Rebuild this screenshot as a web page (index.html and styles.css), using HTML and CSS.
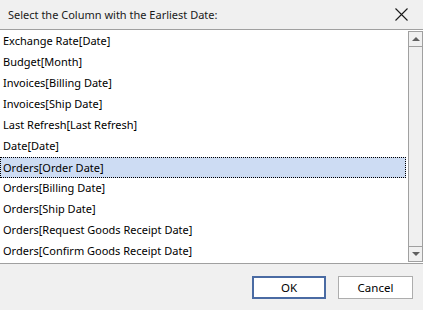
FILE: index.html
```html
<!DOCTYPE html>
<html>

<head>
  <link rel="stylesheet" href="styles.css">
</head>

<body>
  <div class="dialog">
    <div class="titlebar">
      <span class="title">Select the Column with the Earliest Date:</span>
      <svg class="close" width="13" height="13" viewBox="0 0 13 13">
        <path d="M0.5 0.5 L12.5 12.5 M12.5 0.5 L0.5 12.5" stroke="#1a1a1a" stroke-width="1.1" fill="none" />
      </svg>
    </div>

    <div class="listbox">
      <ul class="items">
        <li>Exchange Rate[Date]</li>
        <li>Budget[Month]</li>
        <li>Invoices[Billing Date]</li>
        <li>Invoices[Ship Date]</li>
        <li>Last Refresh[Last Refresh]</li>
        <li>Date[Date]</li>
        <li class="selected">Orders[Order Date]</li>
        <li>Orders[Billing Date]</li>
        <li>Orders[Ship Date]</li>
        <li>Orders[Request Goods Receipt Date]</li>
        <li>Orders[Confirm Goods Receipt Date]</li>
      </ul>
      <div class="scrollbar">
        <div class="sb-btn up"><span class="arrow-up"></span></div>
        <div class="track"></div>
        <div class="sb-btn down"><span class="arrow-down"></span></div>
      </div>
    </div>

    <div class="footer">
      <button class="btn primary">OK</button>
      <button class="btn">Cancel</button>
    </div>
  </div>
</body>

</html>
```

FILE: styles.css
```css
* {
  margin: 0;
  padding: 0;
  box-sizing: border-box;
}

body {
  background-color: #f0f0f0;
  font-family: "Noto Sans", "Open Sans", sans-serif;
  font-size: 11px;
  color: #000;
}

.dialog {
  width: 423px;
  height: 310px;
  display: flex;
  flex-direction: column;
}

.titlebar {
  height: 29px;
  display: flex;
  align-items: center;
  justify-content: space-between;
  padding: 0 15px 0 8px;
}

.title {
  color: #1a1a1a;
}

.listbox {
  display: flex;
  height: 235px;
  border-top: 1px solid #a0a0a0;
  border-bottom: 1px solid #a0a0a0;
  background-color: #fff;
}

.items {
  list-style: none;
  flex: 1;
  padding-top: 1px;
}

.items li {
  height: 21px;
  line-height: 20px;
  padding-left: 3px;
  white-space: nowrap;
}

.items li.selected {
  background-color: #cddcf3;
  border: 1px dotted #000;
  padding-left: 2px;
  line-height: 19px;
  margin-right: 1px;
}

.scrollbar {
  width: 15px;
  margin: 1px 0 1px 1px;
  display: flex;
  flex-direction: column;
  border-left: 1px solid #a0a0a0;
  border-right: 1px solid #a0a0a0;
  background-color: #f0f0f0;
}

.sb-btn {
  height: 16px;
  display: flex;
  align-items: center;
  justify-content: center;
  border-top: 1px solid #a0a0a0;
  border-bottom: 1px solid #a0a0a0;
  background-color: #f0f0f0;
}

.track {
  flex: 1;
}

.arrow-up {
  width: 0;
  height: 0;
  border-left: 4px solid transparent;
  border-right: 4px solid transparent;
  border-bottom: 4px solid #606060;
}

.arrow-down {
  width: 0;
  height: 0;
  border-left: 4px solid transparent;
  border-right: 4px solid transparent;
  border-top: 4px solid #606060;
}

.footer {
  flex: 1;
  display: flex;
  justify-content: flex-end;
  align-items: flex-start;
  gap: 12px;
  padding: 12px 10px 0 0;
}

.btn {
  width: 75px;
  height: 23px;
  font-family: "Noto Sans", "Open Sans", sans-serif;
  font-size: 11.5px;
  color: #000;
  background-color: #fff;
  border: 1px solid #adadad;
}

.btn.primary {
  border: 2px solid #4a6ba3;
  width: 74px;
}
```
